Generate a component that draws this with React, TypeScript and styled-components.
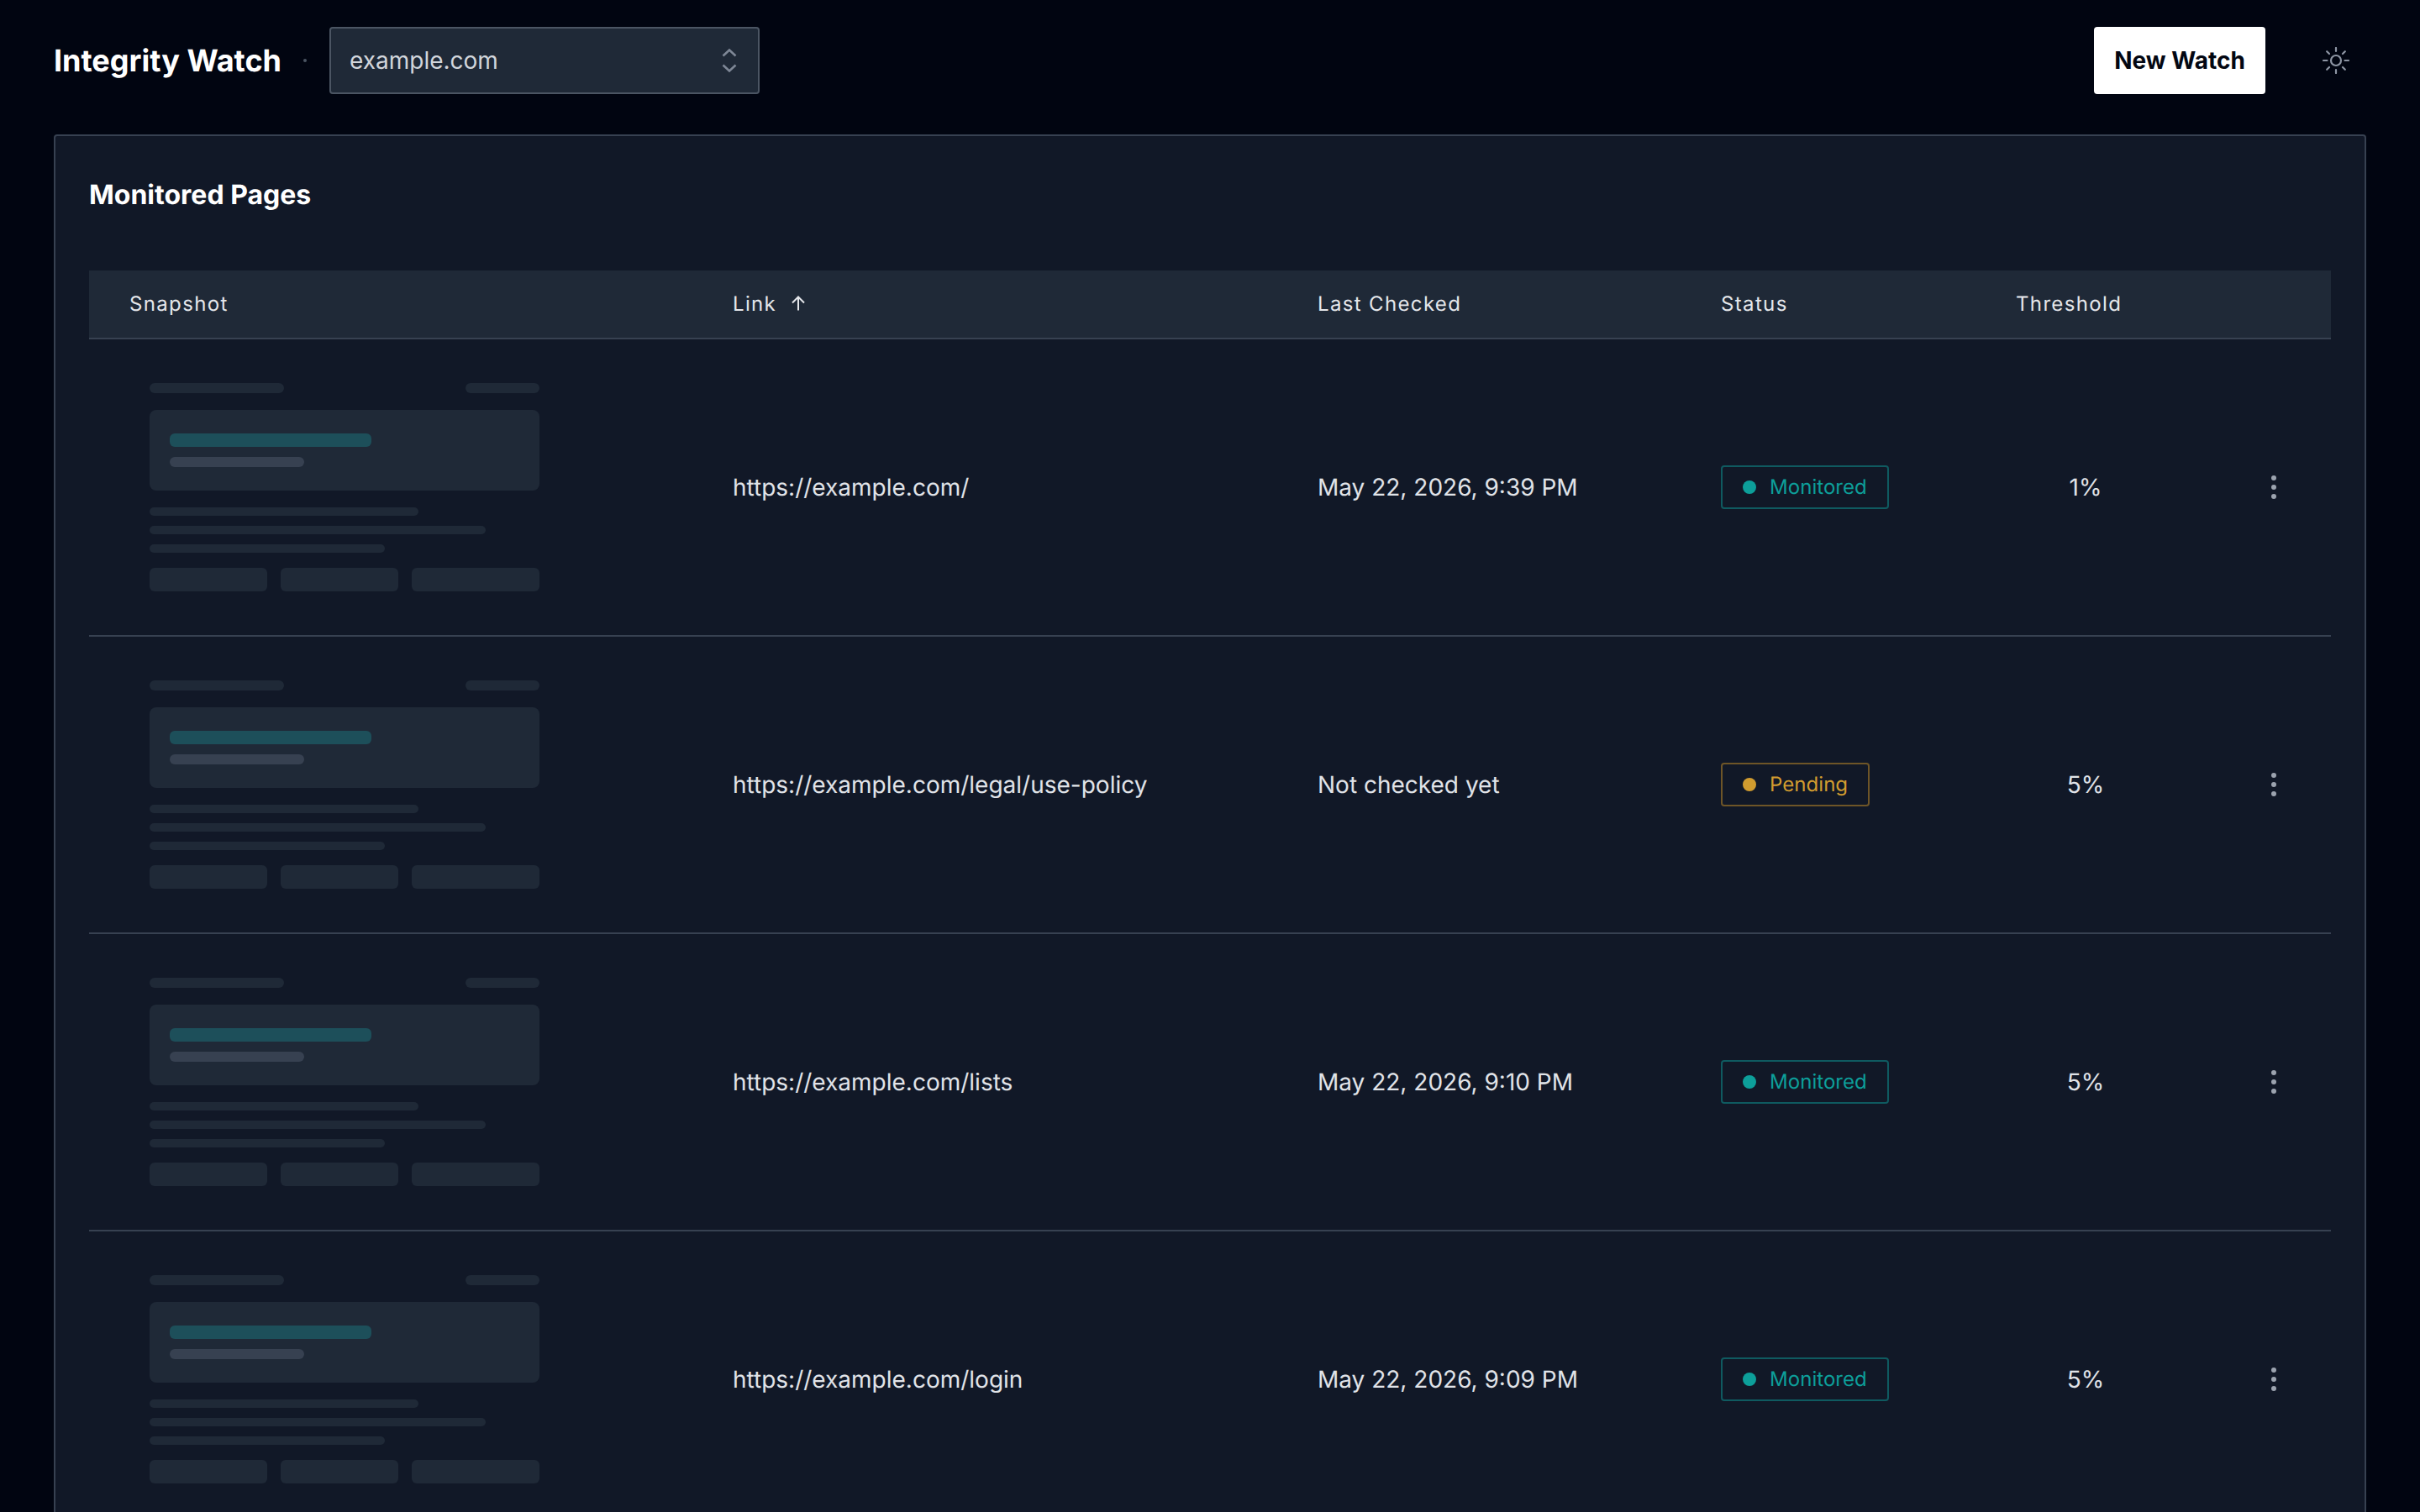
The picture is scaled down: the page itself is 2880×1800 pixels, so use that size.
import { Fragment } from 'react';
import styled, { createGlobalStyle } from 'styled-components';

const GlobalStyle = createGlobalStyle`
    html, body {
        margin: 0;
        height: 100%;
        overflow: hidden;
        background: #010511;
    }
    * {
        box-sizing: border-box;
    }
    body {
        font-family: Inter, "Liberation Sans", sans-serif;
        text-rendering: geometricPrecision;
        -webkit-font-smoothing: antialiased;
    }
`;

const Page = styled.div`
    padding: 32px 64px 0;
    height: 1800px;
    overflow: hidden;
`;

const Topbar = styled.header`
    display: flex;
    align-items: center;
    height: 80px;
    margin-bottom: 48px;
`;

const Brand = styled.h1`
    margin: 0;
    font-size: 36px;
    font-weight: 700;
    line-height: 56px;
    color: #fff;
`;

const Separator = styled.span`
    width: 4px;
    height: 4px;
    margin: 0 27px 0 26px;
    border-radius: 50%;
    background: #4b5563;
`;

const SiteSelect = styled.button`
    display: flex;
    align-items: center;
    justify-content: space-between;
    width: 512px;
    height: 80px;
    padding: 0 18px 0 22px;
    background: #1f2937;
    border: 2px solid #4b5563;
    border-radius: 4px;
    font-family: inherit;
    font-size: 28px;
    color: #d1d5db;
`;

const Spacer = styled.div`
    flex: 1;
`;

const NewWatch = styled.button`
    width: 204px;
    height: 80px;
    margin-right: 48px;
    background: #fff;
    border: 0;
    border-radius: 4px;
    font-family: inherit;
    font-size: 28px;
    font-weight: 700;
    color: #030712;
`;

const ThemeToggle = styled.button`
    display: flex;
    align-items: center;
    justify-content: center;
    width: 72px;
    height: 80px;
    padding: 0;
    background: none;
    border: 0;
    color: #8d95a3;
`;

const Card = styled.section`
    padding: 40px;
    background: #111827;
    border: 2px solid #374151;
    border-radius: 4px;
`;

const CardTitle = styled.h2`
    margin: 0 0 60px;
    font-size: 32px;
    font-weight: 700;
    line-height: 60px;
    color: #fff;
`;

const columns = '718px 696px 480px 351px 166px 1fr';

const HeadRow = styled.div`
    display: grid;
    grid-template-columns: ${columns};
    align-items: center;
    height: 82px;
    padding: 0 0 2px 48px;
    background: #1f2937;
    border-bottom: 2px solid #374151;
`;

const HeadCell = styled.div`
    display: flex;
    align-items: center;
    gap: 16px;
    font-size: 24px;
    font-weight: 400;
    letter-spacing: 1.35px;
    color: #e5e7eb;
`;

const Row = styled.div`
    display: grid;
    grid-template-columns: ${columns};
    align-items: center;
    height: 354px;
    padding: 0 0 0 48px;
    border-bottom: 2px solid #374151;
`;

const Cell = styled.div`
    font-size: 28px;
    color: #e0e3e8;
`;

const PercentCell = styled(Cell)`
    text-align: center;
`;

const ActionCell = styled.div`
    display: flex;
    justify-content: flex-end;
    padding-right: 36px;
`;

const Kebab = styled.button`
    display: flex;
    align-items: center;
    justify-content: center;
    width: 64px;
    height: 64px;
    padding: 0;
    background: none;
    border: 0;
    color: #9ca3af;
`;

const Badge = styled.span<{ $tone: 'teal' | 'amber' }>`
    display: inline-flex;
    align-items: center;
    gap: 16px;
    height: 52px;
    padding: 0 24px;
    border: 2px solid ${(p) => (p.$tone === 'teal' ? '#0f5a60' : '#6e5527')};
    border-radius: 4px;
    font-size: 24px;
    color: ${(p) => (p.$tone === 'teal' ? '#0d9f9a' : '#d19c2f')};
`;

const BadgeDot = styled.span`
    width: 16px;
    height: 16px;
    border-radius: 50%;
    background: currentColor;
`;

const BadgeLabel = styled.span`
    margin-bottom: 2px;
    letter-spacing: 0.05px;
`;

const Thumb = styled.div`
    display: flex;
    flex-direction: column;
    width: 464px;
    margin-left: 24px;
`;

const ThumbTop = styled.div`
    display: flex;
    justify-content: space-between;
    margin-bottom: 20px;
`;

const TopBar = styled.div<{ $w: number }>`
    width: ${(p) => p.$w}px;
    height: 12px;
    background: #1f2937;
    border-radius: 6px;
`;

const Hero = styled.div`
    display: flex;
    flex-direction: column;
    justify-content: center;
    gap: 12px;
    height: 96px;
    margin-bottom: 20px;
    padding-left: 24px;
    background: #1f2937;
    border-radius: 8px;
`;

const HeroAccent = styled.div`
    width: 240px;
    height: 16px;
    background: #1d4f5a;
    border-radius: 6px;
`;

const HeroSub = styled.div`
    width: 160px;
    height: 12px;
    background: #374151;
    border-radius: 6px;
`;

const TextLine = styled.div<{ $w: number }>`
    width: ${(p) => p.$w}px;
    height: 10px;
    margin-bottom: 12px;
    background: #1f2937;
    border-radius: 5px;
`;

const Pills = styled.div`
    display: flex;
    gap: 16px;
    margin-top: 6px;
`;

const Pill = styled.div<{ $w: number }>`
    width: ${(p) => p.$w}px;
    height: 28px;
    background: #1f2937;
    border-radius: 6px;
`;

const ChevronsIcon = () => (
    <svg width="32" height="32" viewBox="0 0 32 32" fill="none" stroke="#7e8796" strokeWidth="2.6">
        <path d="M8.5 10.5 16 3.5l7.5 7M8.5 21.5l7.5 7 7.5-7" />
    </svg>
);

const SunIcon = () => (
    <svg width="32" height="32" viewBox="0 0 32 32" fill="none" stroke="currentColor" strokeWidth="2.2" strokeLinecap="round">
        <circle cx="16" cy="16" r="6" />
        <path d="M16 1v4M16 27v4M1 16h4.5M26.5 16H31M5.2 5.2l2.8 2.8M24 24l2.8 2.8M5.2 26.8 8 24M24 8l2.8-2.8" />
    </svg>
);

const SortIcon = () => (
    <svg width="20" height="20" viewBox="0 0 20 20" fill="none" stroke="#e5e7eb" strokeWidth="2">
        <path d="M10 18.5V3M3 9.5 10 2.5l7 7" />
    </svg>
);

const DotsIcon = () => (
    <svg width="8" height="32" viewBox="0 0 8 32" fill="currentColor">
        <circle cx="4" cy="5" r="3" />
        <circle cx="4" cy="16" r="3" />
        <circle cx="4" cy="27" r="3" />
    </svg>
);

const Snapshot = () => (
    <Thumb>
        <ThumbTop>
            <TopBar $w={160} />
            <TopBar $w={88} />
        </ThumbTop>
        <Hero>
            <HeroAccent />
            <HeroSub />
        </Hero>
        <TextLine $w={320} />
        <TextLine $w={400} />
        <TextLine $w={280} />
        <Pills>
            <Pill $w={140} />
            <Pill $w={140} />
            <Pill $w={152} />
        </Pills>
    </Thumb>
);

const pages = [
    { link: 'https://example.com/', checked: 'May 22, 2026, 9:39 PM', status: 'Monitored', threshold: '1%' },
    { link: 'https://example.com/legal/use-policy', checked: 'Not checked yet', status: 'Pending', threshold: '5%' },
    { link: 'https://example.com/lists', checked: 'May 22, 2026, 9:10 PM', status: 'Monitored', threshold: '5%' },
    { link: 'https://example.com/login', checked: 'May 22, 2026, 9:09 PM', status: 'Monitored', threshold: '5%' },
];

const App = () => {
    return (
        <Fragment>
            <GlobalStyle />
            <Page>
                <Topbar>
                    <Brand>Integrity Watch</Brand>
                    <Separator />
                    <SiteSelect>
                        <span>example.com</span>
                        <ChevronsIcon />
                    </SiteSelect>
                    <Spacer />
                    <NewWatch>New Watch</NewWatch>
                    <ThemeToggle>
                        <SunIcon />
                    </ThemeToggle>
                </Topbar>
                <Card>
                    <CardTitle>Monitored Pages</CardTitle>
                    <HeadRow>
                        <HeadCell>Snapshot</HeadCell>
                        <HeadCell>
                            Link <SortIcon />
                        </HeadCell>
                        <HeadCell>Last Checked</HeadCell>
                        <HeadCell>Status</HeadCell>
                        <HeadCell>Threshold</HeadCell>
                    </HeadRow>
                    {pages.map((page) => (
                        <Row key={page.link}>
                            <Snapshot />
                            <Cell>{page.link}</Cell>
                            <Cell>{page.checked}</Cell>
                            <div>
                                <Badge $tone={page.status === 'Monitored' ? 'teal' : 'amber'}>
                                    <BadgeDot />
                                    <BadgeLabel>{page.status}</BadgeLabel>
                                </Badge>
                            </div>
                            <PercentCell>{page.threshold}</PercentCell>
                            <ActionCell>
                                <Kebab>
                                    <DotsIcon />
                                </Kebab>
                            </ActionCell>
                        </Row>
                    ))}
                </Card>
            </Page>
        </Fragment>
    );
};

export default App;
